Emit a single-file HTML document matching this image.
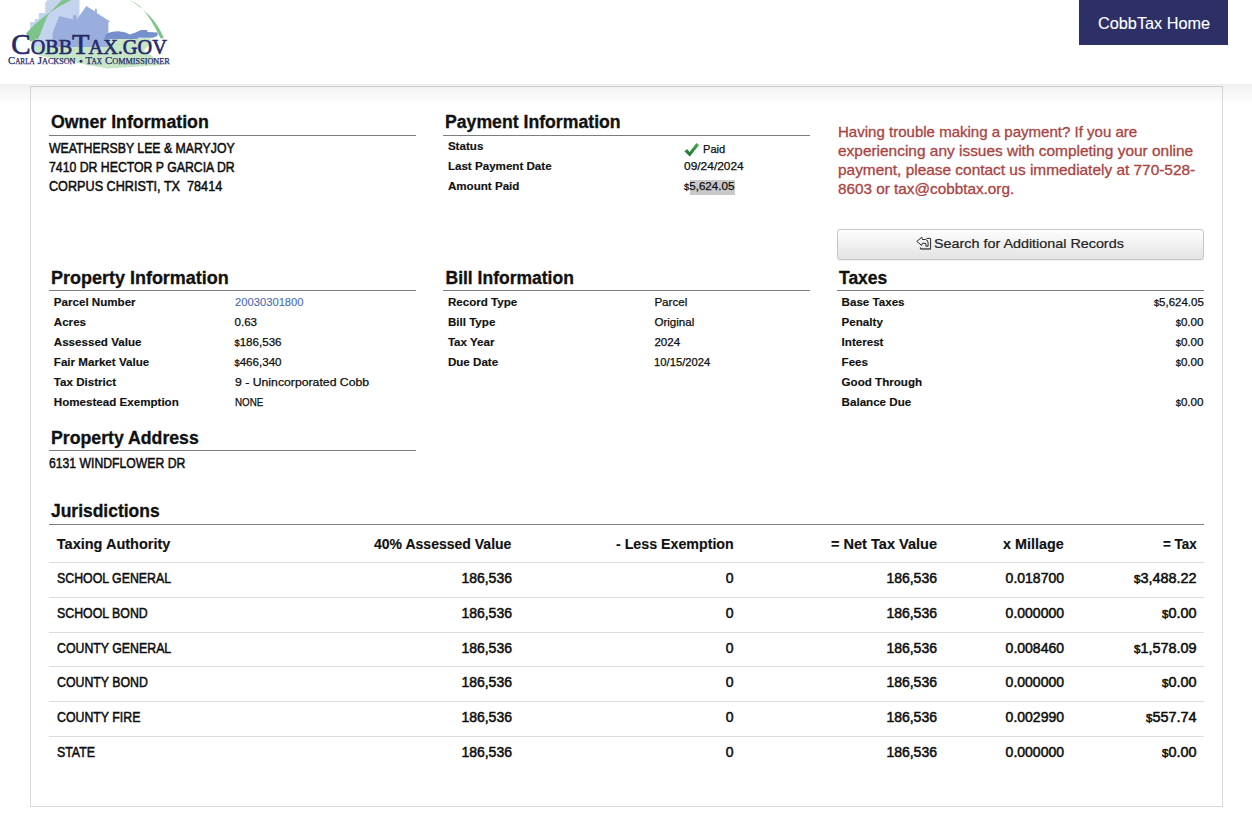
<!DOCTYPE html>
<html><head><meta charset="utf-8"><title>CobbTax</title>
<style>
html,body{margin:0;padding:0;background:#fff;}
body{width:1252px;height:823px;position:relative;overflow:hidden;font-family:"Liberation Sans",sans-serif;}
.t{position:absolute;white-space:nowrap;line-height:1;transform-origin:0 0;}
</style></head><body>
<div id="cont" style="position:absolute;left:30px;top:86px;width:1191px;height:719px;border:1px solid #dadada;background:#fff"></div>
<div id="shadow" style="position:absolute;left:0;top:84px;width:1252px;height:22px;background:linear-gradient(rgba(0,0,0,0.065),rgba(0,0,0,0.035) 30%,rgba(0,0,0,0));z-index:5"></div>
<div id="hdr" style="position:absolute;left:0;top:0;width:1252px;height:84px;background:#fff;z-index:6">
<svg style="position:absolute;left:0;top:0" width="180" height="72" viewBox="0 0 180 72">
<path d="M33.5,46 L60,46 L104,38.5 L150,38 L152.5,42 L143.5,50.5 L152,56 L162,65 L130,67 L107,68.5 L80,63.5 L60,60 L37,55 Z" fill="#c6e6c6"/>
<path d="M46.8,0 L79.5,0 L79.5,46.5 L33.5,46.5 L30.1,34 L30.1,21.9 L34.8,21.9 L34.8,18.9 L38.9,18.9 L38.9,13.1 L45.2,13.1 L45.2,2 L46.8,2 Z" fill="#c5d4ee"/>
<path d="M52.5,33 L59.3,16.1 L72.8,19.3 L73.1,15.3 L76.7,15.3 L76.8,19.6 L78.4,17.3 L86.3,6 L95,11.6 L95,8.8 L96.8,8.8 L96.8,12.9 L110,21.6 L108.4,22.5 L108.4,47 L52.5,47 Z" fill="#9aaedd"/>
<path d="M104.2,39 L105.8,34.5 Q111,31.2 118.5,31.3 Q125,31.6 130,34.5 Q132,33.2 134.5,33 L140.9,30 L147.3,30 L147.4,32 L157.5,32.6 L157.5,35.8 L153,37.7 L137.7,37.7 L137.7,39 Z" fill="#7590cc"/>
<path d="M26,33.6 Q36,22 49.8,12.6 Q56,6 62.5,-0.5 L72.5,-0.5 Q61,4.5 50.2,12.6 C44.5,19 42.8,30 38.3,38.3 L30.4,41.8 Z" fill="#7dc489"/>
<path d="M128.8,-0.5 Q154,14 164,38.3 L160.5,38.3 Q150,16 139.6,5.8 Q134,2 128.8,-0.5 Z" fill="#7dc489"/>
<g fill="#262a6b" font-family="Liberation Serif" stroke="#262a6b" stroke-width="0.65">
<text x="11.2" y="54.3" font-size="29.5" textLength="19.4" lengthAdjust="spacingAndGlyphs">C</text>
<text x="30.8" y="54.3" font-size="21.5" textLength="41.5" lengthAdjust="spacingAndGlyphs">OBB</text>
<text x="72" y="54.3" font-size="29.5" textLength="17.5" lengthAdjust="spacingAndGlyphs">T</text>
<text x="88.5" y="54.3" font-size="21.5" textLength="78.3" lengthAdjust="spacingAndGlyphs">AX.GOV</text>
</g><g fill="#262a6b" font-family="Liberation Serif" stroke="#262a6b" stroke-width="0.25">
<text x="8" y="63.8" font-size="11.3" textLength="7.2" lengthAdjust="spacingAndGlyphs">C</text>
<text x="15.2" y="63.8" font-size="8.3" textLength="19.5" lengthAdjust="spacingAndGlyphs">ARLA</text>
<text x="37.5" y="63.8" font-size="11.3" textLength="4.6" lengthAdjust="spacingAndGlyphs">J</text>
<text x="42.1" y="63.8" font-size="8.3" textLength="33.4" lengthAdjust="spacingAndGlyphs">ACKSON</text>
<circle cx="81" cy="61.3" r="1.3"/>
<text x="85.5" y="63.8" font-size="11.3" textLength="6.6" lengthAdjust="spacingAndGlyphs">T</text>
<text x="91.5" y="63.8" font-size="8.3" textLength="10.5" lengthAdjust="spacingAndGlyphs">AX</text>
<text x="105" y="63.8" font-size="11.3" textLength="7.3" lengthAdjust="spacingAndGlyphs">C</text>
<text x="112.3" y="63.8" font-size="8.3" textLength="57.5" lengthAdjust="spacingAndGlyphs">OMMISSIONER</text>
</g>
</svg>

<div style="position:absolute;left:1079px;top:0;width:149px;height:45px;background:#2c3067"></div>
</div>
<div style="position:absolute;left:837px;top:229px;width:365px;height:29px;border:1px solid #c6c6c6;border-radius:3px;background:linear-gradient(#fefefe,#e3e3e3);box-shadow:0 1px 1px rgba(0,0,0,0.06)"></div>
<svg style="position:absolute;left:684px;top:142px" width="16" height="16" viewBox="0 0 16 16"><defs><linearGradient id="cg" x1="0" y1="0" x2="0" y2="1"><stop offset="0" stop-color="#3fb34f"/><stop offset="1" stop-color="#1c6e34"/></linearGradient></defs><path d="M0.3 9.3 L3.2 6.9 L5.6 10 L12.4 1 L15 3 L5.8 14.6 Z" fill="url(#cg)"/></svg>
<svg style="position:absolute;left:910px;top:230px;z-index:8" width="26" height="24" viewBox="910 230 26 24"><g fill="none" stroke="#2a2a2a" stroke-width="1" stroke-linejoin="miter"><path d="M916.8,241.4 L921.8,237.2 L922.4,239.5 L925.5,239.5 Q928.1,240 928.1,242.8 L928.1,246.2 L925.9,246.2 L925.9,243.9 Q925.9,243.3 925,243.3 L922.4,243.3 L921.6,245.4 Z"/><path d="M926.6,238.4 L930.6,238.4 L930.6,248.9 L920.4,248.9 L920.4,247.4" /></g><path d="M920.6,248.6 L930.9,248.6 L930.9,249.9 L920.6,249.9 Z" fill="#555" opacity="0.55"/></svg>
<div style="position:relative;z-index:7">
<div class="t" style="left:51.20px;top:114px;font-size:17.5px; font-weight:bold;color:#111;transform:scaleX(1.0144);-webkit-text-stroke:0.3px #111;">Owner Information</div><div style="position:absolute;left:49px;top:135px;width:367px;height:1px;background:#7d7d7d"></div><div class="t" style="left:49.30px;top:141px;font-size:14.5px;color:#0d0d0d;transform:scaleX(0.8473);-webkit-text-stroke:0.5px #0d0d0d;">WEATHERSBY LEE &amp; MARYJOY</div><div class="t" style="left:49.30px;top:160px;font-size:14.5px;color:#0d0d0d;transform:scaleX(0.8462);-webkit-text-stroke:0.5px #0d0d0d;">7410 DR HECTOR P GARCIA DR</div><div class="t" style="left:49.30px;top:179px;font-size:14.5px;color:#0d0d0d;transform:scaleX(0.8714);-webkit-text-stroke:0.5px #0d0d0d;white-space:pre;">CORPUS CHRISTI, TX  78414</div><div class="t" style="left:51.20px;top:270px;font-size:17.5px; font-weight:bold;color:#111;transform:scaleX(1.0273);-webkit-text-stroke:0.3px #111;">Property Information</div><div style="position:absolute;left:49px;top:290px;width:367px;height:1px;background:#7d7d7d"></div><div class="t" style="left:53.80px;top:296px;font-size:11.6px; font-weight:bold;color:#111;-webkit-text-stroke:0.15px #111;">Parcel Number</div><div class="t" style="left:234.50px;top:296px;font-size:11.6px;color:#4a6bb3;transform:scaleX(0.9666);-webkit-text-stroke:0.1px #4a6bb3;">20030301800</div><div class="t" style="left:53.80px;top:316px;font-size:11.6px; font-weight:bold;color:#111;-webkit-text-stroke:0.15px #111;">Acres</div><div class="t" style="left:234.50px;top:316px;font-size:11.6px;color:#0d0d0d;-webkit-text-stroke:0.25px #0d0d0d;">0.63</div><div class="t" style="left:53.80px;top:336px;font-size:11.6px; font-weight:bold;color:#111;-webkit-text-stroke:0.15px #111;">Assessed Value</div><div class="t" style="left:234.50px;top:336px;font-size:11.6px;color:#0d0d0d;-webkit-text-stroke:0.25px #0d0d0d;"><span style="font-size:80%">$</span>186,536</div><div class="t" style="left:53.80px;top:356px;font-size:11.6px; font-weight:bold;color:#111;-webkit-text-stroke:0.15px #111;">Fair Market Value</div><div class="t" style="left:234.50px;top:356px;font-size:11.6px;color:#0d0d0d;-webkit-text-stroke:0.25px #0d0d0d;"><span style="font-size:80%">$</span>466,340</div><div class="t" style="left:53.80px;top:376px;font-size:11.6px; font-weight:bold;color:#111;-webkit-text-stroke:0.15px #111;">Tax District</div><div class="t" style="left:234.50px;top:376px;font-size:11.6px;color:#0d0d0d;transform:scaleX(1.0564);-webkit-text-stroke:0.25px #0d0d0d;">9 - Unincorporated Cobb</div><div class="t" style="left:53.80px;top:396px;font-size:11.6px; font-weight:bold;color:#111;-webkit-text-stroke:0.15px #111;">Homestead Exemption</div><div class="t" style="left:234.50px;top:396px;font-size:11.6px;color:#0d0d0d;transform:scaleX(0.8474);-webkit-text-stroke:0.25px #0d0d0d;">NONE</div><div class="t" style="left:51.20px;top:430px;font-size:17.5px; font-weight:bold;color:#111;transform:scaleX(1.0109);-webkit-text-stroke:0.3px #111;">Property Address</div><div style="position:absolute;left:49px;top:450px;width:367px;height:1px;background:#7d7d7d"></div><div class="t" style="left:49.30px;top:456px;font-size:14.5px;color:#0d0d0d;transform:scaleX(0.8417);-webkit-text-stroke:0.5px #0d0d0d;">6131 WINDFLOWER DR</div><div class="t" style="left:445.40px;top:114px;font-size:17.5px; font-weight:bold;color:#111;transform:scaleX(1.0089);-webkit-text-stroke:0.3px #111;">Payment Information</div><div style="position:absolute;left:443px;top:135px;width:367px;height:1px;background:#7d7d7d"></div><div class="t" style="left:447.90px;top:140px;font-size:11.6px; font-weight:bold;color:#111;-webkit-text-stroke:0.15px #111;">Status</div><div class="t" style="left:447.90px;top:160px;font-size:11.6px; font-weight:bold;color:#111;-webkit-text-stroke:0.15px #111;">Last Payment Date</div><div class="t" style="left:447.90px;top:180px;font-size:11.6px; font-weight:bold;color:#111;-webkit-text-stroke:0.15px #111;">Amount Paid</div><div class="t" style="left:702.80px;top:143px;font-size:11.6px;color:#0d0d0d;transform:scaleX(0.9564);-webkit-text-stroke:0.25px #0d0d0d;">Paid</div><div class="t" style="left:684.00px;top:160px;font-size:11.6px;color:#0d0d0d;transform:scaleX(1.0300);-webkit-text-stroke:0.25px #0d0d0d;">09/24/2024</div><div style="position:absolute;left:690px;top:180px;width:45px;height:15px;background:#c9c9c9"></div><div class="t" style="left:684.00px;top:180px;font-size:11.6px;color:#0d0d0d;transform:scaleX(1.0036);-webkit-text-stroke:0.25px #0d0d0d;"><span style="font-size:80%">$</span>5,624.05</div><div class="t" style="left:445.50px;top:270px;font-size:17.5px; font-weight:bold;color:#111;-webkit-text-stroke:0.3px #111;">Bill Information</div><div style="position:absolute;left:443px;top:290px;width:367px;height:1px;background:#7d7d7d"></div><div class="t" style="left:447.90px;top:296px;font-size:11.6px; font-weight:bold;color:#111;-webkit-text-stroke:0.15px #111;">Record Type</div><div class="t" style="left:654.40px;top:296px;font-size:11.6px;color:#0d0d0d;-webkit-text-stroke:0.25px #0d0d0d;">Parcel</div><div class="t" style="left:447.90px;top:316px;font-size:11.6px; font-weight:bold;color:#111;-webkit-text-stroke:0.15px #111;">Bill Type</div><div class="t" style="left:654.40px;top:316px;font-size:11.6px;color:#0d0d0d;-webkit-text-stroke:0.25px #0d0d0d;">Original</div><div class="t" style="left:447.90px;top:336px;font-size:11.6px; font-weight:bold;color:#111;-webkit-text-stroke:0.15px #111;">Tax Year</div><div class="t" style="left:654.40px;top:336px;font-size:11.6px;color:#0d0d0d;-webkit-text-stroke:0.25px #0d0d0d;">2024</div><div class="t" style="left:447.90px;top:356px;font-size:11.6px; font-weight:bold;color:#111;-webkit-text-stroke:0.15px #111;">Due Date</div><div class="t" style="left:654.40px;top:356px;font-size:11.6px;color:#0d0d0d;transform:scaleX(0.9697);-webkit-text-stroke:0.25px #0d0d0d;">10/15/2024</div><div class="t" style="left:837.80px;top:125px;font-size:14.5px;color:#a94442;transform:scaleX(1.0369);-webkit-text-stroke:0.3px #a94442;">Having trouble making a payment? If you are</div><div class="t" style="left:837.80px;top:144px;font-size:14.5px;color:#a94442;transform:scaleX(1.0645);-webkit-text-stroke:0.3px #a94442;">experiencing any issues with completing your online</div><div class="t" style="left:837.80px;top:163px;font-size:14.5px;color:#a94442;transform:scaleX(1.0628);-webkit-text-stroke:0.3px #a94442;">payment, please contact us immediately at 770-528-</div><div class="t" style="left:837.80px;top:182px;font-size:14.5px;color:#a94442;transform:scaleX(1.0547);-webkit-text-stroke:0.3px #a94442;">8603 or tax@cobbtax.org.</div><div class="t" style="left:839.00px;top:270px;font-size:17.5px; font-weight:bold;color:#111;-webkit-text-stroke:0.3px #111;">Taxes</div><div style="position:absolute;left:837px;top:290px;width:367px;height:1px;background:#7d7d7d"></div><div class="t" style="left:841.60px;top:296px;font-size:11.6px; font-weight:bold;color:#111;-webkit-text-stroke:0.15px #111;">Base Taxes</div><div class="t" style="left:1153.70px;top:296px;font-size:11.6px;color:#0d0d0d;transform:scaleX(0.9897);-webkit-text-stroke:0.25px #0d0d0d;"><span style="font-size:80%">$</span>5,624.05</div><div class="t" style="left:841.60px;top:316px;font-size:11.6px; font-weight:bold;color:#111;-webkit-text-stroke:0.15px #111;">Penalty</div><div class="t" style="left:1175.77px;top:316px;font-size:11.6px;color:#0d0d0d;-webkit-text-stroke:0.25px #0d0d0d;"><span style="font-size:80%">$</span>0.00</div><div class="t" style="left:841.60px;top:336px;font-size:11.6px; font-weight:bold;color:#111;-webkit-text-stroke:0.15px #111;">Interest</div><div class="t" style="left:1175.77px;top:336px;font-size:11.6px;color:#0d0d0d;-webkit-text-stroke:0.25px #0d0d0d;"><span style="font-size:80%">$</span>0.00</div><div class="t" style="left:841.60px;top:356px;font-size:11.6px; font-weight:bold;color:#111;-webkit-text-stroke:0.15px #111;">Fees</div><div class="t" style="left:1175.77px;top:356px;font-size:11.6px;color:#0d0d0d;-webkit-text-stroke:0.25px #0d0d0d;"><span style="font-size:80%">$</span>0.00</div><div class="t" style="left:841.60px;top:376px;font-size:11.6px; font-weight:bold;color:#111;-webkit-text-stroke:0.15px #111;">Good Through</div><div class="t" style="left:841.60px;top:396px;font-size:11.6px; font-weight:bold;color:#111;-webkit-text-stroke:0.15px #111;">Balance Due</div><div class="t" style="left:1175.77px;top:396px;font-size:11.6px;color:#0d0d0d;-webkit-text-stroke:0.25px #0d0d0d;"><span style="font-size:80%">$</span>0.00</div><div class="t" style="left:51.20px;top:503px;font-size:17.5px; font-weight:bold;color:#111;transform:scaleX(0.9971);-webkit-text-stroke:0.3px #111;">Jurisdictions</div><div style="position:absolute;left:49px;top:524px;width:1155px;height:1px;background:#7d7d7d"></div><div class="t" style="left:56.80px;top:537px;font-size:14.5px; font-weight:bold;color:#111;-webkit-text-stroke:0.15px #111;">Taxing Authority</div><div class="t" style="left:374.40px;top:537px;font-size:14.5px; font-weight:bold;color:#111;transform:scaleX(0.9666);-webkit-text-stroke:0.15px #111;">40% Assessed Value</div><div class="t" style="left:615.60px;top:537px;font-size:14.5px; font-weight:bold;color:#111;transform:scaleX(0.9803);-webkit-text-stroke:0.15px #111;">- Less Exemption</div><div class="t" style="left:830.80px;top:537px;font-size:14.5px; font-weight:bold;color:#111;transform:scaleX(1.0027);-webkit-text-stroke:0.15px #111;">= Net Tax Value</div><div class="t" style="left:1003.30px;top:537px;font-size:14.5px; font-weight:bold;color:#111;transform:scaleX(0.9911);-webkit-text-stroke:0.15px #111;">x Millage</div><div class="t" style="left:1163.00px;top:537px;font-size:14.5px; font-weight:bold;color:#111;transform:scaleX(0.9228);-webkit-text-stroke:0.15px #111;">= Tax</div><div style="position:absolute;left:49px;top:562px;width:1155px;height:1px;background:#dedede"></div><div style="position:absolute;left:49px;top:597px;width:1155px;height:1px;background:#dedede"></div><div style="position:absolute;left:49px;top:632px;width:1155px;height:1px;background:#dedede"></div><div style="position:absolute;left:49px;top:666px;width:1155px;height:1px;background:#dedede"></div><div style="position:absolute;left:49px;top:701px;width:1155px;height:1px;background:#dedede"></div><div style="position:absolute;left:49px;top:736px;width:1155px;height:1px;background:#dedede"></div><div class="t" style="left:56.80px;top:571px;font-size:14px;color:#0d0d0d;transform:scaleX(0.8810);-webkit-text-stroke:0.5px #0d0d0d;">SCHOOL GENERAL</div><div class="t" style="left:461.39px;top:571px;font-size:14px;color:#0d0d0d;-webkit-text-stroke:0.5px #0d0d0d;">186,536</div><div class="t" style="left:725.72px;top:571px;font-size:14px;color:#0d0d0d;-webkit-text-stroke:0.5px #0d0d0d;">0</div><div class="t" style="left:886.39px;top:571px;font-size:14px;color:#0d0d0d;-webkit-text-stroke:0.5px #0d0d0d;">186,536</div><div class="t" style="left:1005.61px;top:571px;font-size:14px;color:#0d0d0d;-webkit-text-stroke:0.5px #0d0d0d;">0.018700</div><div class="t" style="left:1134.25px;top:571px;font-size:14px;color:#0d0d0d;transform:scaleX(1.0300);-webkit-text-stroke:0.5px #0d0d0d;"><span style="font-size:80%">$</span>3,488.22</div><div class="t" style="left:56.80px;top:606px;font-size:14px;color:#0d0d0d;transform:scaleX(0.8810);-webkit-text-stroke:0.5px #0d0d0d;">SCHOOL BOND</div><div class="t" style="left:461.39px;top:606px;font-size:14px;color:#0d0d0d;-webkit-text-stroke:0.5px #0d0d0d;">186,536</div><div class="t" style="left:725.72px;top:606px;font-size:14px;color:#0d0d0d;-webkit-text-stroke:0.5px #0d0d0d;">0</div><div class="t" style="left:886.39px;top:606px;font-size:14px;color:#0d0d0d;-webkit-text-stroke:0.5px #0d0d0d;">186,536</div><div class="t" style="left:1005.61px;top:606px;font-size:14px;color:#0d0d0d;-webkit-text-stroke:0.5px #0d0d0d;">0.000000</div><div class="t" style="left:1162.32px;top:606px;font-size:14px;color:#0d0d0d;transform:scaleX(1.0300);-webkit-text-stroke:0.5px #0d0d0d;"><span style="font-size:80%">$</span>0.00</div><div class="t" style="left:56.80px;top:641px;font-size:14px;color:#0d0d0d;transform:scaleX(0.8810);-webkit-text-stroke:0.5px #0d0d0d;">COUNTY GENERAL</div><div class="t" style="left:461.39px;top:641px;font-size:14px;color:#0d0d0d;-webkit-text-stroke:0.5px #0d0d0d;">186,536</div><div class="t" style="left:725.72px;top:641px;font-size:14px;color:#0d0d0d;-webkit-text-stroke:0.5px #0d0d0d;">0</div><div class="t" style="left:886.39px;top:641px;font-size:14px;color:#0d0d0d;-webkit-text-stroke:0.5px #0d0d0d;">186,536</div><div class="t" style="left:1005.61px;top:641px;font-size:14px;color:#0d0d0d;-webkit-text-stroke:0.5px #0d0d0d;">0.008460</div><div class="t" style="left:1134.25px;top:641px;font-size:14px;color:#0d0d0d;transform:scaleX(1.0300);-webkit-text-stroke:0.5px #0d0d0d;"><span style="font-size:80%">$</span>1,578.09</div><div class="t" style="left:56.80px;top:675px;font-size:14px;color:#0d0d0d;transform:scaleX(0.8810);-webkit-text-stroke:0.5px #0d0d0d;">COUNTY BOND</div><div class="t" style="left:461.39px;top:675px;font-size:14px;color:#0d0d0d;-webkit-text-stroke:0.5px #0d0d0d;">186,536</div><div class="t" style="left:725.72px;top:675px;font-size:14px;color:#0d0d0d;-webkit-text-stroke:0.5px #0d0d0d;">0</div><div class="t" style="left:886.39px;top:675px;font-size:14px;color:#0d0d0d;-webkit-text-stroke:0.5px #0d0d0d;">186,536</div><div class="t" style="left:1005.61px;top:675px;font-size:14px;color:#0d0d0d;-webkit-text-stroke:0.5px #0d0d0d;">0.000000</div><div class="t" style="left:1162.32px;top:675px;font-size:14px;color:#0d0d0d;transform:scaleX(1.0300);-webkit-text-stroke:0.5px #0d0d0d;"><span style="font-size:80%">$</span>0.00</div><div class="t" style="left:56.80px;top:710px;font-size:14px;color:#0d0d0d;transform:scaleX(0.8810);-webkit-text-stroke:0.5px #0d0d0d;">COUNTY FIRE</div><div class="t" style="left:461.39px;top:710px;font-size:14px;color:#0d0d0d;-webkit-text-stroke:0.5px #0d0d0d;">186,536</div><div class="t" style="left:725.72px;top:710px;font-size:14px;color:#0d0d0d;-webkit-text-stroke:0.5px #0d0d0d;">0</div><div class="t" style="left:886.39px;top:710px;font-size:14px;color:#0d0d0d;-webkit-text-stroke:0.5px #0d0d0d;">186,536</div><div class="t" style="left:1005.61px;top:710px;font-size:14px;color:#0d0d0d;-webkit-text-stroke:0.5px #0d0d0d;">0.002990</div><div class="t" style="left:1146.27px;top:710px;font-size:14px;color:#0d0d0d;transform:scaleX(1.0300);-webkit-text-stroke:0.5px #0d0d0d;"><span style="font-size:80%">$</span>557.74</div><div class="t" style="left:56.80px;top:745px;font-size:14px;color:#0d0d0d;transform:scaleX(0.8810);-webkit-text-stroke:0.5px #0d0d0d;">STATE</div><div class="t" style="left:461.39px;top:745px;font-size:14px;color:#0d0d0d;-webkit-text-stroke:0.5px #0d0d0d;">186,536</div><div class="t" style="left:725.72px;top:745px;font-size:14px;color:#0d0d0d;-webkit-text-stroke:0.5px #0d0d0d;">0</div><div class="t" style="left:886.39px;top:745px;font-size:14px;color:#0d0d0d;-webkit-text-stroke:0.5px #0d0d0d;">186,536</div><div class="t" style="left:1005.61px;top:745px;font-size:14px;color:#0d0d0d;-webkit-text-stroke:0.5px #0d0d0d;">0.000000</div><div class="t" style="left:1162.32px;top:745px;font-size:14px;color:#0d0d0d;transform:scaleX(1.0300);-webkit-text-stroke:0.5px #0d0d0d;"><span style="font-size:80%">$</span>0.00</div><div class="t" style="left:1097.60px;top:15px;font-size:16.5px;color:#fff;transform:scaleX(0.9858);-webkit-text-stroke:0.12px #fff;">CobbTax Home</div><div class="t" style="left:934.20px;top:237px;font-size:13px;color:#222;transform:scaleX(1.1036);-webkit-text-stroke:0.2px #222;">Search for Additional Records</div>
</div>
</body></html>
